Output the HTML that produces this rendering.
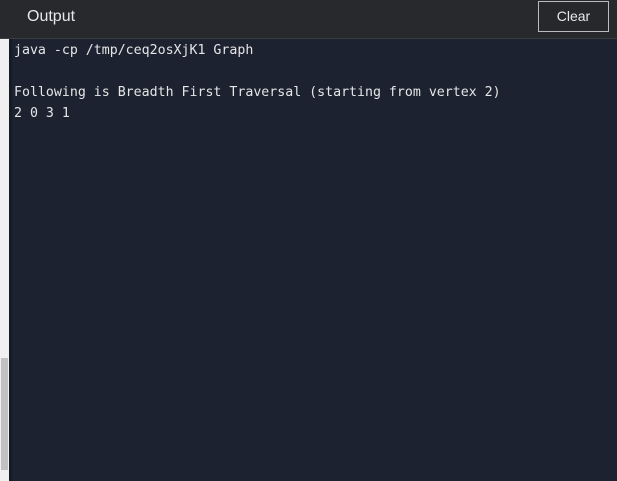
<!DOCTYPE html>
<html><head><style>
html,body{margin:0;padding:0;width:617px;height:481px;overflow:hidden;background:#1c2230;}
.hdr{position:absolute;left:0;top:0;width:617px;height:38px;background:#27292d;border-bottom:1px solid #3a3d42;}
.hdr .t{position:absolute;left:27px;top:8px;color:#e8e8e8;font:16px "Liberation Sans",sans-serif;}
.btn{position:absolute;left:538px;top:1px;width:71px;height:31px;border:1px solid #b8bcc0;box-sizing:border-box;color:#e8e8e8;font:14px "Liberation Sans",sans-serif;text-align:center;line-height:29px;background:#26282b;}
.sb{position:absolute;left:0;top:39px;width:9px;height:442px;background:#f0f0f0;}
.thumb{position:absolute;left:1px;top:319px;width:7px;height:112px;background:#c1c1c1;}
.edge{position:absolute;left:9px;top:39px;width:3px;height:442px;background:#161b25;}
pre{position:absolute;left:14px;top:40px;margin:0;color:#e6e6e6;font:13.25px/21px "DejaVu Sans Mono","Liberation Mono",monospace;}
</style></head><body>
<div class="hdr"><div class="t">Output</div><div class="btn">Clear</div></div>
<div class="sb"><div class="thumb"></div></div>
<div class="edge"></div>
<pre>java -cp /tmp/ceq2osXjK1 Graph

Following is Breadth First Traversal (starting from vertex 2)
2 0 3 1</pre>
</body></html>
